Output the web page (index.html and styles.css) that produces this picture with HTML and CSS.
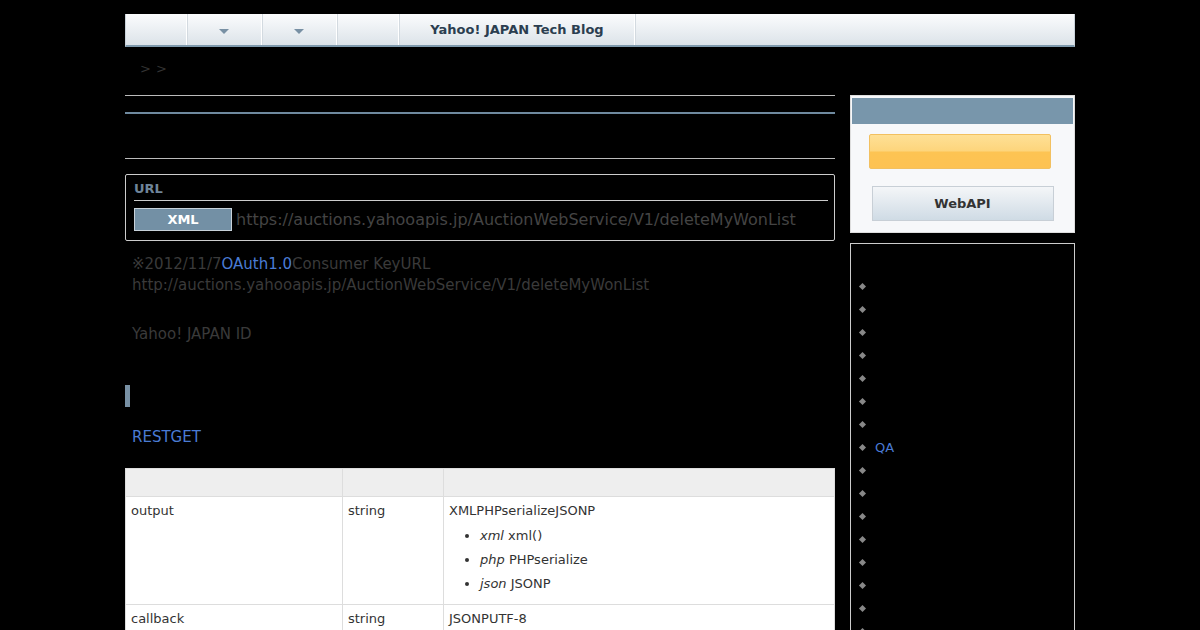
FILE: index.html
```html
<!DOCTYPE html>
<html lang="ja">
<head>
    <meta charset="UTF-8">
    <title>deleteMyWonList</title>
    <link rel="stylesheet" href="styles.css">
</head>
<body>
    <div class="page">
        <!-- グローバルナビ -->
        <ul class="gnav">
            <li class="gnav-item w62"></li>
            <li class="gnav-item w75"><span class="caret"></span></li>
            <li class="gnav-item w75"><span class="caret"></span></li>
            <li class="gnav-item w62"></li>
            <li class="gnav-item blog">Yahoo! JAPAN Tech Blog</li>
            <li class="gnav-item rest"></li>
        </ul>

        <div class="crumbs">&gt; &gt;</div>

        <div class="columns">
            <div class="main">
                <div class="title-top"></div>
                <div class="title-bar"></div>
                <div class="title-bottom"></div>

                <div class="url-box">
                    <div class="url-head">URL</div>
                    <div class="url-row">
                        <span class="fmt">XML</span>
                        <span class="url">https://auctions.yahooapis.jp/AuctionWebService/V1/deleteMyWonList</span>
                    </div>
                </div>

                <div class="notes">
                    <p>※2012/11/7<a href="#">OAuth1.0</a>Consumer KeyURL<br>http://auctions.yahooapis.jp/AuctionWebService/V1/deleteMyWonList</p>
                    <p class="gap">Yahoo! JAPAN ID</p>
                </div>

                <h2 class="section"></h2>
                <p class="rest-link"><a href="#">RESTGET</a></p>

                <table class="params">
                    <tr class="head">
                        <th class="c1"></th>
                        <th class="c2"></th>
                        <th></th>
                    </tr>
                    <tr>
                        <td>output</td>
                        <td>string</td>
                        <td>XMLPHPserializeJSONP
                            <ul>
                                <li><em>xml</em> xml()</li>
                                <li><em>php</em> PHPserialize</li>
                                <li><em>json</em> JSONP</li>
                            </ul>
                        </td>
                    </tr>
                    <tr>
                        <td>callback</td>
                        <td>string</td>
                        <td>JSONPUTF-8</td>
                    </tr>
                </table>
            </div>

            <div class="side">
                <div class="side-box">
                    <div class="side-head"></div>
                    <div class="side-body">
                        <a class="btn-orange" href="#"></a>
                        <a class="btn-gray" href="#">WebAPI</a>
                    </div>
                </div>
                <div class="side-list">
                    <ul>
                        <li></li><li></li><li></li><li></li>
                        <li></li><li></li><li></li>
                        <li><a href="#">QA</a></li>
                        <li></li><li></li><li></li><li></li>
                        <li></li><li></li><li></li><li></li>
                    </ul>
                </div>
            </div>
        </div>
    </div>
</body>
</html>
```

FILE: styles.css
```css
body {
    margin: 0;
    background: #000;
    font-family: "DejaVu Sans", sans-serif;
    color: #3a3a3a;
    overflow: hidden;
}

a {
    color: #4a7bd4;
    text-decoration: none;
}

.page {
    width: 950px;
    margin: 14px auto 0;
}

/* nav */
.gnav {
    display: flex;
    margin: 0;
    padding: 0;
    list-style: none;
    height: 31px;
    border: 1px solid #c9d2da;
    border-bottom: 2px solid #7f9aad;
    border-top: 0;
    background: linear-gradient(#fbfcfd, #dce3e9);
}

.gnav-item {
    display: flex;
    align-items: center;
    justify-content: center;
    border-right: 1px solid #fff;
    box-shadow: 1px 0 0 #d3dae0;
}

.w62 { width: 61px; }
.w75 { width: 74px; }
.gnav-item:first-child { width: 60px; }

.caret {
    width: 0;
    height: 0;
    margin-top: 4px;
    border-left: 5px solid transparent;
    border-right: 5px solid transparent;
    border-top: 5px solid #7890a4;
}

.blog {
    width: 234px;
    font-weight: bold;
    font-size: 13px;
    color: #2b3e50;
    padding: 0 0 1px 1px;
}

.rest {
    flex: 1;
    border-right: 0;
    box-shadow: none;
}

.crumbs {
    padding: 14px 0 0 15px;
    height: 22px;
    font-size: 13px;
    color: #333;
    word-spacing: 1px;
}

.columns {
    display: flex;
    gap: 15px;
    margin-top: 12px;
}

.main {
    width: 710px;
}

.title-top {
    height: 1px;
    background: #bbb;
}

.title-bar {
    height: 2px;
    margin-top: 16px;
    background: #6f8a9f;
}

.title-bottom {
    height: 1px;
    margin-top: 44px;
    background: #bbb;
}

.url-box {
    margin-top: 15px;
    border: 1px solid #ccc;
    border-radius: 2px;
    padding: 6px 6px 6px 8px;
    height: 53px;
}

.url-head {
    font-weight: bold;
    font-size: 13px;
    color: #6f8599;
    padding-bottom: 4px;
    border-bottom: 1px solid #ccc;
}

.url-row {
    display: flex;
    align-items: center;
    margin-top: 7px;
}

.fmt {
    width: 96px;
    height: 21px;
    line-height: 21px;
    border: 1px solid #c8d2da;
    background: #7390a5;
    color: #fff;
    font-weight: bold;
    font-size: 13px;
    text-align: center;
}

.url {
    margin-left: 4px;
    font-size: 16px;
    color: #444;
}

.notes {
    padding: 0 7px;
    margin-top: 13px;
    font-size: 15px;
    line-height: 21px;
}

.notes p {
    margin: 0;
}

.notes .gap {
    margin-top: 28px;
}

.section {
    margin: 40px 0 0;
    height: 22px;
    border-left: 5px solid #7890a4;
}

.rest-link {
    margin: 21px 0 0 7px;
    font-size: 15px;
}

.params {
    width: 100%;
    margin-top: 22px;
    border-collapse: collapse;
    background: #fff;
    font-size: 13px;
    color: #333;
}

.params th,
.params td {
    border: 1px solid #ddd;
    padding: 6px 5px 5px;
    text-align: left;
    vertical-align: top;
    line-height: 15px;
}

.params .head th {
    height: 16px;
    background: #eee;
}

.params .c1 { width: 206px; }
.params .c2 { width: 90px; }

.params ul {
    margin: 6px 0 3px;
    padding-left: 31px;
}

.params li {
    line-height: 24px;
}

/* sidebar */
.side {
    width: 225px;
}

.side-box {
    border: 1px solid #ddd;
    padding: 2px 1px 11px;
    background: #f7f8fa;
}

.side-head {
    height: 26px;
    background: #7896ab;
}

.side-body {
    display: flex;
    flex-direction: column;
    align-items: center;
}

.btn-orange {
    display: block;
    width: 180px;
    height: 33px;
    margin: 10px 0 0 -6px;
    border: 1px solid #f2c060;
    border-radius: 2px;
    background: linear-gradient(#fee096 0%, #fdd57c 48%, #fdc453 52%, #fdc253 100%);
}

.btn-gray {
    display: block;
    box-sizing: border-box;
    width: 182px;
    height: 35px;
    margin: 17px 0 0 0;
    line-height: 33px;
    border: 1px solid #c8cfd6;
    background: linear-gradient(#f4f6f8, #cfdbe5);
    text-align: center;
    font-weight: bold;
    font-size: 13px;
    color: #333;
}

.side-list {
    margin-top: 10px;
    height: 420px;
    border: 1px solid #ccc;
}

.side-list ul {
    list-style: none;
    margin: 31px 0 0;
    padding: 0 0 0 9px;
}

.side-list li {
    position: relative;
    height: 23px;
    line-height: 23px;
    padding-left: 15px;
    font-size: 13px;
}

.side-list li::before {
    content: "";
    position: absolute;
    left: 0;
    top: 9px;
    width: 5px;
    height: 5px;
    background: #888;
    transform: rotate(45deg);
}
```
